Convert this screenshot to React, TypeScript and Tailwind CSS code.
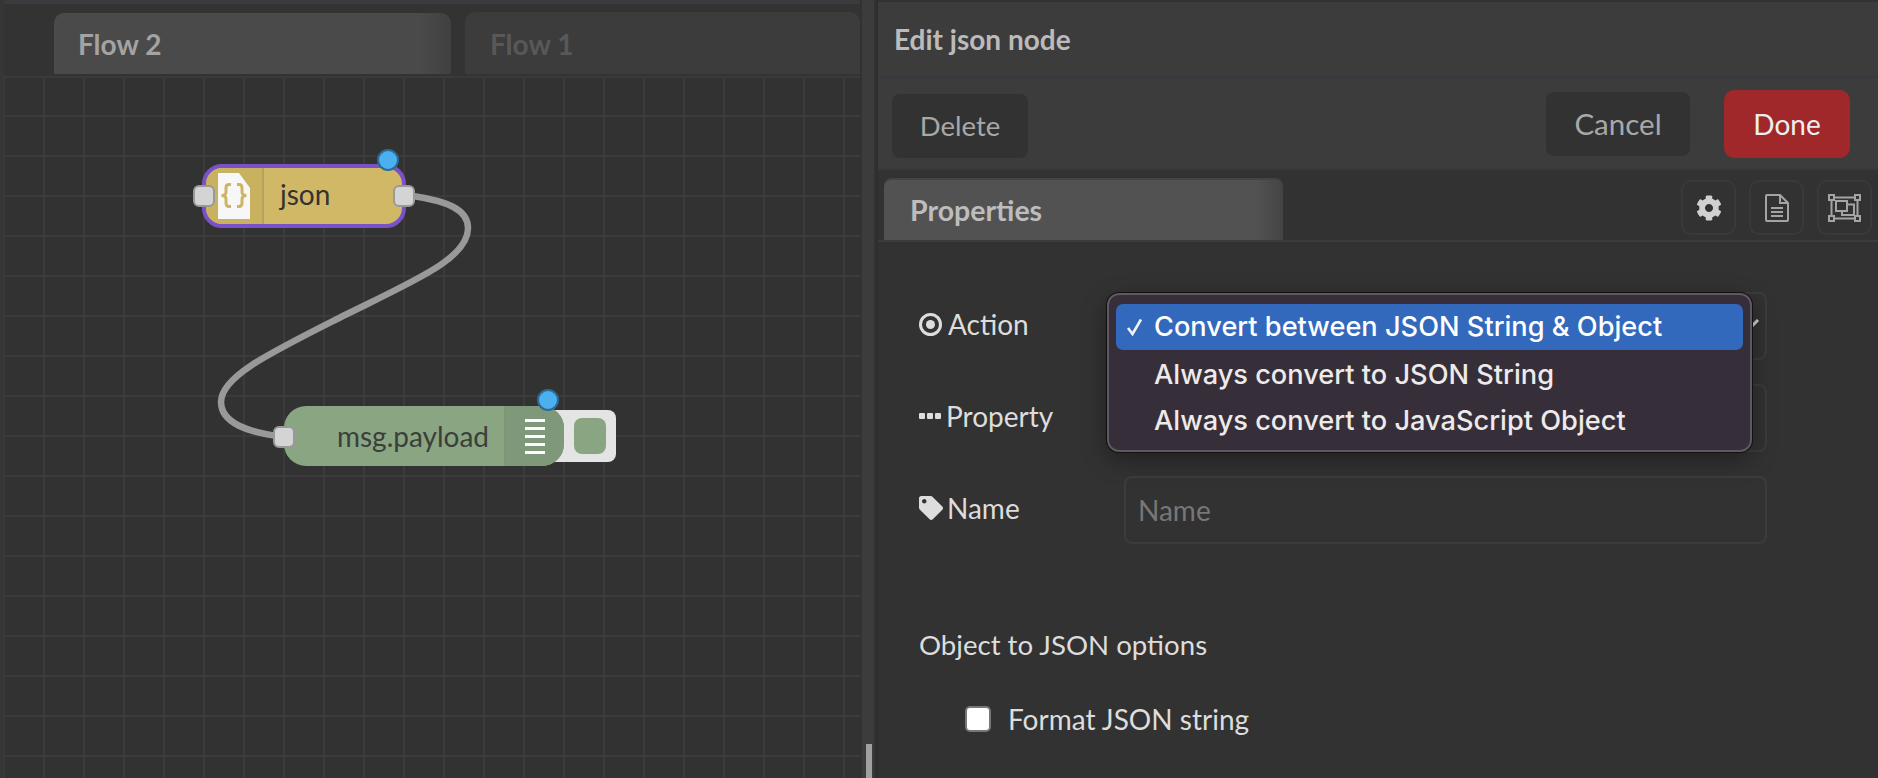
import React from "react";
import { FaCog, FaTag } from "react-icons/fa";

const lato = "font-['Lato','Noto_Sans',sans-serif]";

function Port({ className }: { className: string }) {
  return <div className={`absolute h-[22px] w-[22px] rounded-[6px] border-2 border-[#999999] bg-[#d4d4d4] ${className}`} />;
}

function Dot({ className }: { className: string }) {
  return <div className={`absolute h-[22px] w-[22px] rounded-full border-2 border-[#2d6a94] bg-[#4cb0f0] ${className}`} />;
}

function Canvas() {
  return (
    <div className="relative h-[702px] w-[856px] overflow-hidden border-t-2 border-[#3a3a3a] bg-[#323232] bg-[linear-gradient(to_right,#3b3b3b_2px,transparent_2px),linear-gradient(to_bottom,#3b3b3b_2px,transparent_2px)] bg-[size:40px_40px] bg-[position:-1px_-3px]">
      <svg className="absolute left-0 top-[-78px]" width="856" height="778" fill="none">
        <path
          d="M409 196 C442 201 464 209 464 228 C464 258 414 279 341 315 C268 352 217 376 217 402 C217 424 246 432 273 436"
          stroke="#999999"
          strokeWidth="6.5"
        />
      </svg>
      {/* json node */}
      <div className="absolute left-[198px] top-[86px] flex h-[64px] w-[204px] overflow-hidden rounded-[20px] border-4 border-[#7a52c8] bg-[#d0b866]">
        <div className="flex h-full w-[58px] border-r-2 border-[#b7a25c] bg-[#c8b15f] pl-[12px] pt-[5px]">
          <svg width="32" height="46" viewBox="0 0 32 46" fill="none">
            <path d="M0 0H21L32 15V46H0Z" fill="#f7f7f7" />
            <path d="M13 11.5H11Q8 11.5 8 15V19Q8 22.5 3.5 22.5Q8 22.5 8 26V30Q8 33.5 11 33.5H13" stroke="#cdb566" strokeWidth="3" />
            <path d="M19 11.5H21Q24 11.5 24 15V19Q24 22.5 28.5 22.5Q24 22.5 24 26V30Q24 33.5 21 33.5H19" stroke="#cdb566" strokeWidth="3" />
          </svg>
        </div>
        <span className={`${lato} pl-[16px] text-[28px] leading-[52px] text-[#333333]`}>json</span>
      </div>
      <Port className="left-[189px] top-[107px]" />
      <Port className="left-[389px] top-[107px]" />
      <Dot className="left-[373px] top-[71px]" />
      {/* debug node */}
      <div className="absolute left-[545px] top-[332px] flex h-[52px] w-[67px] items-center justify-end rounded-r-[8px] bg-[#e4e4e4] pr-[10px]">
        <div className="h-[36px] w-[32px] rounded-[8px] bg-[#8aa582]" />
      </div>
      <div className="absolute left-[280px] top-[328px] flex h-[60px] w-[280px] items-center overflow-hidden rounded-[22px] bg-[#8aa582]">
        <span className={`${lato} ml-[53px] w-[167px] text-[28px] leading-[60px] text-[#3b3f3b]`}>msg.payload</span>
        <div className="flex h-full flex-1 flex-col items-center justify-center gap-[5px] border-l-2 border-[#7d9675] bg-[#80987a]">
          <div className="h-[3px] w-[20px] bg-white" />
          <div className="h-[3px] w-[20px] bg-white" />
          <div className="h-[3px] w-[20px] bg-white" />
          <div className="h-[3px] w-[20px] bg-white" />
          <div className="h-[3px] w-[20px] bg-white" />
        </div>
      </div>
      <Port className="left-[269px] top-[348px]" />
      <Dot className="left-[533px] top-[311px]" />
    </div>
  );
}

function Label({ icon, text }: { icon: React.ReactNode; text: string }) {
  return (
    <div className="flex h-[68px] w-[205px] items-center pb-[4px] text-[28px] text-[#dddddd]">
      {icon}
      <span>{text}</span>
    </div>
  );
}

function IconButton({ children }: { children: React.ReactNode }) {
  return (
    <div className="flex h-[55px] w-[55px] items-center justify-center rounded-[10px] border-2 border-[#393939]">
      {children}
    </div>
  );
}

function Option({ text, selected = false }: { text: string; selected?: boolean }) {
  return (
    <div className={`flex h-[46px] items-center rounded-[7px] pl-[10px] ${selected ? "bg-[#3369bd] text-white" : "text-[#eeeaea]"}`}>
      <span className="flex w-[28px] shrink-0 items-center">
        {selected && (
          <svg width="18" height="18" viewBox="0 0 18 18" fill="none">
            <path d="M2 10L6.5 16L15 1.5" stroke="#f2f2f2" strokeWidth="2.6" />
          </svg>
        )}
      </span>
      <span>{text}</span>
    </div>
  );
}

export default function App() {
  return (
    <div className={`${lato} flex h-[778px] w-[1878px] overflow-hidden bg-[#323232]`}>
      <div className="w-[4px] shrink-0 bg-[#363636]" />
      <div className="flex w-[856px] shrink-0 flex-col">
        <div className="flex h-[76px] items-end gap-[14px] border-t-[4px] border-[#393b3f] bg-[#333333] pl-[50px]">
          <div className="mb-[2px] flex h-[61px] w-[397px] items-center rounded-t-[10px] bg-[linear-gradient(to_right,#4a4a4a_92%,#404040)] pl-[24px] pt-[1px] text-[28px] font-bold text-[#a3a3a3]">
            Flow 2
          </div>
          <div className="mb-[2px] flex h-[62px] w-[395px] items-center rounded-t-[10px] bg-[#3c3c3c] pl-[25px] pt-[1px] text-[28px] font-bold text-[#585858]">
            Flow 1
          </div>
        </div>
        <Canvas />
      </div>
      <div className="relative w-[16px] shrink-0">
        <div className="ml-[2px] h-full w-[12px] bg-[#3c3c3c]" />
        <div className="absolute left-[6px] top-[744px] h-[34px] w-[6px] bg-[#a0a0a0]" />
      </div>
      <div className="relative flex min-w-0 flex-1 flex-col border-l-2 border-[#2e2e2e]">
        <div className="mt-[2px] flex h-[76px] items-center border-b-2 border-[#363a40] bg-[#3c3c3c] pl-[16px] text-[28px] font-bold text-[#bbbbbb]">
          <span>Edit json node</span>
        </div>
        <div className="flex h-[92px] items-start border-b-2 border-[#363a40] bg-[#3c3c3c] pl-[14px] pr-[28px] text-[28px]">
          <div className="mt-[16px] flex h-[64px] w-[136px] items-center justify-center rounded-[8px] bg-[#323232] text-[27.5px] text-[#a8a8a8]">Delete</div>
          <div className="ml-auto mt-[14px] flex h-[64px] w-[144px] items-center justify-center rounded-[8px] bg-[#323232] text-[29.5px] text-[#a8a8a8]">Cancel</div>
          <div className="ml-[34px] mt-[12px] flex h-[68px] w-[126px] items-center justify-center rounded-[10px] bg-[#a0282b] text-[#eeeeee]">Done</div>
        </div>
        <div className="flex h-[72px] items-end border-b-2 border-[#3c3c3c] pl-[6px] pr-[6px]">
          <div className="flex h-[62px] w-[399px] items-center rounded-t-[8px] border-t-2 border-[#444444] bg-[linear-gradient(to_right,#525252_93%,#444444)] pl-[26px] text-[28.5px] font-bold text-[#bdbdbd]">
            Properties
          </div>
          <div className="mb-[5px] ml-auto flex gap-[13px]">
            <IconButton><FaCog size={26} className="text-[#d0d0d0]" /></IconButton>
            <IconButton>
              <svg width="24" height="28" viewBox="0 0 24 28" fill="none" stroke="#a4a4a4" strokeWidth="2">
                <path d="M1 2Q1 1 2 1H15L23 9V26Q23 27 22 27H2Q1 27 1 26Z" />
                <path d="M15 1V9H23M6 14H18M6 18H18M6 22H18" />
              </svg>
            </IconButton>
            <IconButton>
              <svg width="33" height="28" viewBox="0 0 33 28" fill="none" stroke="#a4a4a4" strokeWidth="2">
                <rect x="1" y="1" width="5" height="5" />
                <rect x="27" y="1" width="5" height="5" />
                <rect x="1" y="22" width="5" height="5" />
                <rect x="27" y="22" width="5" height="5" />
                <path d="M6 3.5H27M6 24.5H27M3.5 6V22M29.5 6V22" />
                <rect x="8" y="7" width="11" height="10" />
                <path d="M19 10.5H26V21H14V17" />
              </svg>
            </IconButton>
          </div>
        </div>
        <div className="flex flex-col pl-[41px] pt-[50px]">
          <div className="flex items-start">
            <Label
              icon={
                <svg width="23" height="23" viewBox="0 0 23 23" className="mr-[6px] shrink-0" fill="none">
                  <circle cx="11.5" cy="11.5" r="10" stroke="#dddddd" strokeWidth="3" />
                  <circle cx="11.5" cy="11.5" r="4.5" fill="#dddddd" />
                </svg>
              }
              text="Action"
            />
            <div className="flex h-[68px] w-[643px] items-center justify-end rounded-[8px] border-2 border-[#3c3c3c] pr-[5px]">
              <svg width="18" height="12" viewBox="0 0 18 12" fill="none" className="mt-[-2px]">
                <path d="M1 1L8 9L16 1" stroke="#cccccc" strokeWidth="3" />
              </svg>
            </div>
          </div>
          <div className="mt-[24px] flex items-start">
            <Label
              icon={
                <svg width="22" height="6" viewBox="0 0 22 6" className="mr-[5px] shrink-0" fill="#dddddd">
                  <rect x="0" y="0" width="6" height="6" rx="1" />
                  <rect x="8" y="0" width="6" height="6" rx="1" />
                  <rect x="16" y="0" width="6" height="6" rx="1" />
                </svg>
              }
              text="Property"
            />
            <div className="h-[68px] w-[643px] rounded-[8px] border-2 border-[#3c3c3c]" />
          </div>
          <div className="mt-[24px] flex items-start">
            <Label icon={<FaTag size={24} className="mr-[4px] shrink-0" />} text="Name" />
            <div className="flex h-[68px] w-[643px] items-center rounded-[8px] border-2 border-[#3c3c3c] pl-[12px] pb-[1px] text-[28px] text-[#777777]">Name</div>
          </div>
          <div className="mt-[83px] text-[27.6px] leading-[36px] text-[#dddddd]">Object to JSON options</div>
          <div className="mt-[38px] flex items-center pl-[46px] text-[28px] leading-[36px] text-[#dddddd]">
            <div className="h-[26px] w-[26px] rounded-[5px] border-2 border-[#777777] bg-white" />
            <span className="ml-[17px]">Format JSON string</span>
          </div>
        </div>
        {/* native select menu */}
        <div className="absolute left-[229px] top-[293px] h-[159px] w-[645px] rounded-[12px] border-2 border-[#5f5860] bg-[#362f39] px-[7px] pt-[9px] font-['Inter',sans-serif] text-[27.2px] font-[450] shadow-[0_0_0_1px_#111111,0_8px_24px_rgba(0,0,0,0.35)]">
          <Option selected text="Convert between JSON String & Object" />
          <div className="pt-[2px]">
            <Option text="Always convert to JSON String" />
            <Option text="Always convert to JavaScript Object" />
          </div>
        </div>
      </div>
    </div>
  );
}
